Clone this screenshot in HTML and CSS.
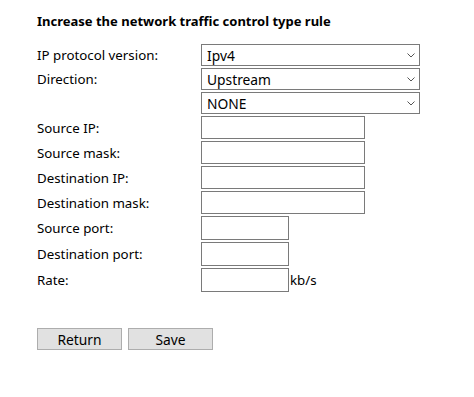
FILE: index.html
```html
<!DOCTYPE html>
<html lang="en">
<head>
    <meta charset="UTF-8">
    <meta name="viewport" content="width=device-width, initial-scale=1.0">
    <title>Traffic control rule</title>
    <link rel="stylesheet" href="styles.css">
</head>
<body>
    <div class="divprincipal">
        <h2 class="titulo">Increase the network traffic control type rule</h2>

        <div class="fila fila-select">
            <label for="version">IP protocol version:</label>
            <div class="caja-select">
                <select id="version">
                    <option>Ipv4</option>
                    <option>Ipv6</option>
                </select>
                <svg class="flecha" width="8" height="5" viewBox="0 0 8 5"><path d="M0.5 0.5 L4 4 L7.5 0.5" fill="none" stroke="#555" stroke-width="1"/></svg>
            </div>
        </div>
        <div class="fila fila-select">
            <label for="direccion">Direction:</label>
            <div class="caja-select">
                <select id="direccion">
                    <option>Upstream</option>
                    <option>Downstream</option>
                </select>
                <svg class="flecha" width="8" height="5" viewBox="0 0 8 5"><path d="M0.5 0.5 L4 4 L7.5 0.5" fill="none" stroke="#555" stroke-width="1"/></svg>
            </div>
        </div>
        <div class="fila fila-select">
            <label></label>
            <div class="caja-select">
                <select id="protocolo">
                    <option>NONE</option>
                    <option>TCP</option>
                    <option>UDP</option>
                </select>
                <svg class="flecha" width="8" height="5" viewBox="0 0 8 5"><path d="M0.5 0.5 L4 4 L7.5 0.5" fill="none" stroke="#555" stroke-width="1"/></svg>
            </div>
        </div>

        <div class="fila fila-input">
            <label for="srcip">Source IP:</label>
            <input type="text" id="srcip" class="largo">
        </div>
        <div class="fila fila-input">
            <label for="srcmask">Source mask:</label>
            <input type="text" id="srcmask" class="largo">
        </div>
        <div class="fila fila-input">
            <label for="dstip">Destination IP:</label>
            <input type="text" id="dstip" class="largo">
        </div>
        <div class="fila fila-input">
            <label for="dstmask">Destination mask:</label>
            <input type="text" id="dstmask" class="largo">
        </div>
        <div class="fila fila-puerto">
            <label for="srcport">Source port:</label>
            <input type="text" id="srcport" class="corto">
        </div>
        <div class="fila fila-puerto">
            <label for="dstport">Destination port:</label>
            <input type="text" id="dstport" class="corto">
        </div>
        <div class="fila fila-puerto">
            <label for="rate">Rate:</label>
            <input type="text" id="rate" class="corto">
            <span class="unidad">kb/s</span>
        </div>

        <div class="divboton">
            <button id="botonvolver">Return</button>
            <button id="botonguardar">Save</button>
        </div>
    </div>
</body>
</html>
```

FILE: styles.css
```css
* {
    box-sizing: border-box;
    padding: 0;
    margin: 0;
}

html,
body {
    height: 100%;
    width: 100%;
    background: #fff;
}

body {
    font-family: "Noto Sans", "Open Sans", sans-serif;
    font-size: 13.3px;
    color: #000;
}

.divprincipal {
    padding: 12px 0 0 37px;
}

.titulo {
    font-size: 13px;
    font-weight: bold;
    line-height: 18px;
    margin-bottom: 14px;
}

.fila {
    display: flex;
    align-items: center;
    margin-bottom: 2px;
}

.fila label {
    width: 164px;
    flex: none;
}

.fila-select {
    height: 22px;
}

.fila-input {
    height: 23px;
}

.fila-puerto {
    height: 24px;
}

.caja-select {
    position: relative;
    width: 219px;
    height: 22px;
}

.caja-select select {
    appearance: none;
    -webkit-appearance: none;
    width: 100%;
    height: 100%;
    border: 1px solid #7a7a7a;
    border-radius: 0;
    background: #fff;
    font-family: inherit;
    font-size: 13.8px;
    color: #000;
    padding: 0 0 0 5px;
}

.flecha {
    position: absolute;
    right: 5px;
    top: 9px;
    pointer-events: none;
}

input {
    height: 100%;
    border: 1px solid #7a7a7a;
    border-radius: 0;
    font-family: inherit;
    font-size: 13px;
    padding: 0 3px;
}

.largo {
    width: 164px;
}

.corto {
    width: 88px;
}

.unidad {
    margin-left: 1px;
}

.divboton {
    display: flex;
    gap: 6px;
    margin-top: 36px;
}

button {
    cursor: pointer;
    width: 85px;
    height: 22px;
    background: #e1e1e1;
    border: 1px solid #adadad;
    font-family: inherit;
    font-size: 13.8px;
    color: #000;
}
```
